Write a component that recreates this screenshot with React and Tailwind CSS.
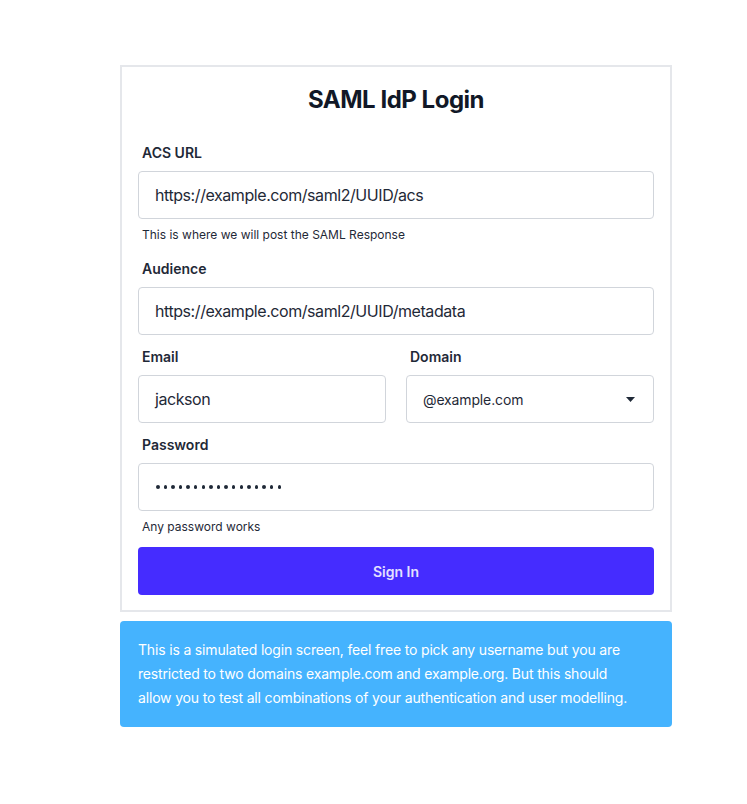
export default function App() {
  return (
    <div className="min-h-screen bg-white pt-[65px]" style={{ fontFamily: "Inter, 'Noto Sans', sans-serif" }}>
      <div className="ml-[120px] w-[552px]">
        <div className="border-2 border-[#e5e7eb] px-4 pt-[17px] pb-[15px]">
          <h1 className="text-center text-[24px] leading-8 font-bold tracking-[-0.02em] text-[#111827] mb-[27px]">SAML IdP Login</h1>

          <div className="mb-4">
            <label className="block px-1 text-[14px] leading-5 font-semibold text-[#1f2937] mb-2">ACS URL</label>
            <div className="h-12 border border-[#d1d5db] rounded flex items-center px-4 text-[16px] tracking-[-0.027em] text-[#1f2937]">https://example.com/saml2/UUID/acs</div>
            <p className="mt-2 px-1 text-[12px] leading-4 text-[#1f2937]">This is where we will post the SAML Response</p>
          </div>

          <div className="mb-3">
            <label className="block px-1 text-[14px] leading-5 font-semibold text-[#1f2937] mb-2">Audience</label>
            <div className="h-12 border border-[#d1d5db] rounded flex items-center px-4 text-[16px] tracking-[-0.027em] text-[#1f2937]">https://example.com/saml2/UUID/metadata</div>
          </div>

          <div className="mb-3 grid grid-cols-2 gap-5">
            <div>
              <label className="block px-1 text-[14px] leading-5 font-semibold text-[#1f2937] mb-2">Email</label>
              <div className="h-12 border border-[#d1d5db] rounded flex items-center px-4 text-[16px] tracking-[-0.027em] text-[#1f2937]">jackson</div>
            </div>
            <div>
              <label className="block px-1 text-[14px] leading-5 font-semibold text-[#1f2937] mb-2">Domain</label>
              <div className="h-12 border border-[#d1d5db] rounded flex items-center justify-between pl-4 pr-[18px] text-[14px] tracking-[-0.01em] text-[#1f2937]">
                <span>@example.com</span>
                <svg width="9" height="5" viewBox="0 0 9 5"><path d="M0 0 H9 L4.5 5 Z" fill="#1f2937" /></svg>
              </div>
            </div>
          </div>

          <div className="mb-3">
            <label className="block px-1 text-[14px] leading-5 font-semibold text-[#1f2937] mb-2">Password</label>
            <div className="h-12 border border-[#d1d5db] rounded flex items-center pl-[17px] pr-4 text-[#1f2937] gap-[4.1px]">
              {Array.from({ length: 17 }).map((_, i) => (
                <span key={i} className="block w-[3.5px] h-[3.5px] rounded-full bg-[#1f2937]" />
              ))}
            </div>
            <p className="mt-2 px-1 text-[12px] leading-4 text-[#1f2937]">Any password works</p>
          </div>

          <button className="w-full h-12 rounded bg-[#452cff] text-[#e4e0ff] text-[14px] font-semibold">Sign In</button>
        </div>

        <div className="mt-[9px] rounded bg-[#45b3fe] pl-[18px] pr-[34px] py-[17px] text-[14px] leading-6 tracking-[-0.012em] text-white">
          This is a simulated login screen, feel free to pick any username but you are restricted to two domains example.com and example.org. But this should allow you to test all combinations of your authentication and user modelling.
        </div>
      </div>
    </div>
  );
}
